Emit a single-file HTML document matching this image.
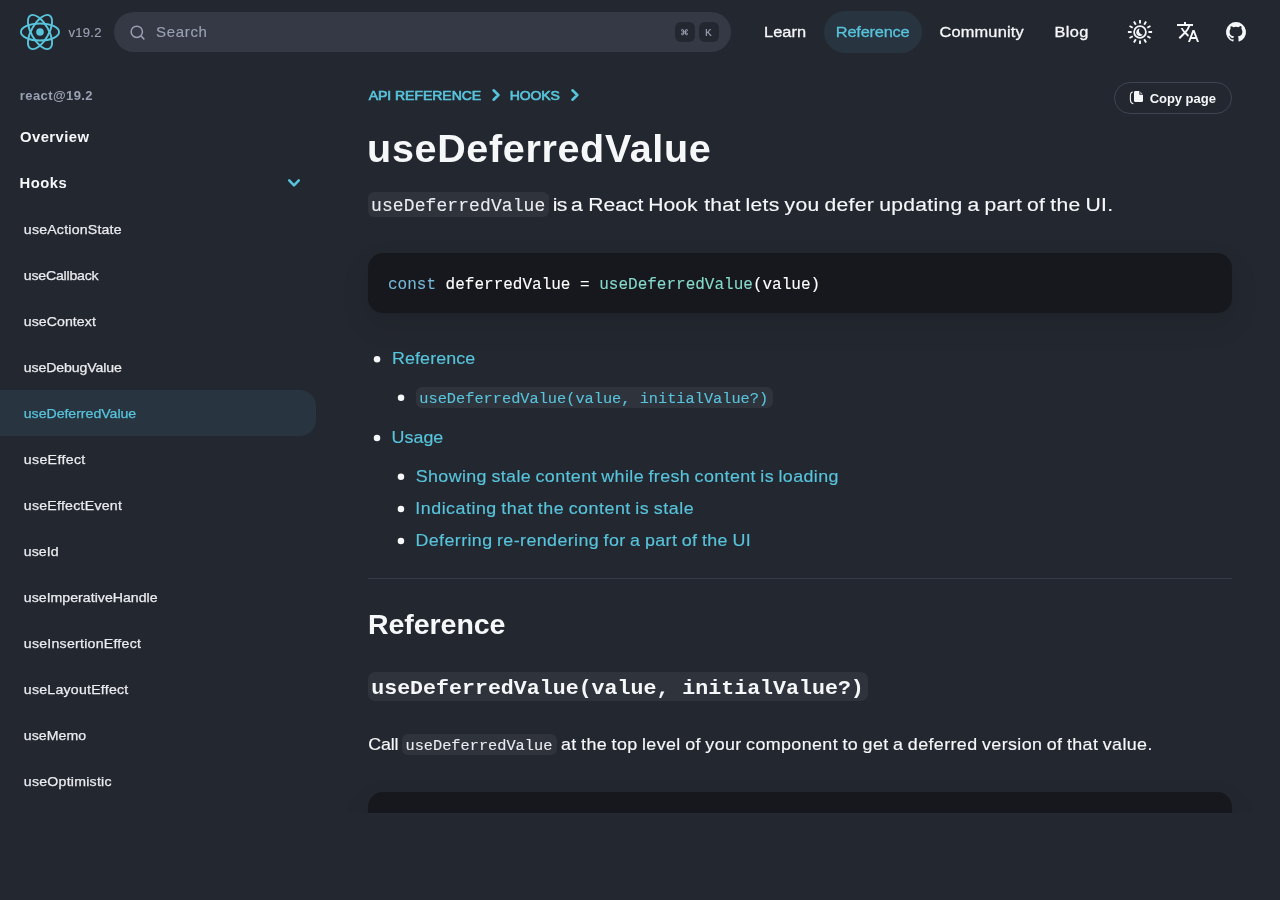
<!DOCTYPE html>
<html lang="en">
<head>
<meta charset="utf-8">
<title>useDeferredValue – React</title>
<style>
*{box-sizing:border-box;margin:0;padding:0}
html,body{width:1280px;height:900px;overflow:hidden;background:#23272f}
body{position:relative;font-family:"Liberation Sans",sans-serif;color:#f6f7f9}
#clip{position:absolute;left:0;top:0;width:1280px;height:813px;overflow:hidden;will-change:transform}
.a{position:absolute;white-space:pre;line-height:20px}
.s{position:absolute}
svg{position:absolute;display:block;overflow:visible}
#search{left:114px;top:12px;width:617px;height:40px;border-radius:20px;background:#343945}
.kbd{top:22px;width:20px;height:20px;border-radius:6px;background:#23272f}
#pill{left:824px;top:11px;width:98px;height:42px;border-radius:21px;background:#283541}
#active{left:0;top:390px;width:316px;height:46px;border-radius:0 16px 16px 0;background:#283541}
.code{background:#16181d;border-radius:15px;box-shadow:0 .8px 2px rgba(0,0,0,.032),0 2.700px 6.700px rgba(0,0,0,.048),0 12px 30px rgba(0,0,0,.09)}
.ic{background:#2f333c;border-radius:6px}
.dot{width:6.6px;height:6.6px;border-radius:50%;background:#f6f7f9;margin:-3.3px 0 0 -3.3px}
#copybtn{left:1114px;top:82px;width:118px;height:32px;border:1px solid #3e4555;border-radius:16px}
#hr{left:368px;top:578px;width:864px;height:1px;background:#343a46}
</style>
</head>
<body>
<div id="clip">

<!-- header -->
<svg style="left:20px;top:14px" width="40" height="36" viewBox="-10.5 -9.45 21 18.9" fill="none"><circle r="2" fill="#58c4dc"/><g stroke="#58c4dc" stroke-width="1"><ellipse rx="10" ry="4.5"/><ellipse rx="10" ry="4.5" transform="rotate(60)"/><ellipse rx="10" ry="4.5" transform="rotate(120)"/></g></svg>
<div class="s" id="search"></div>
<svg style="left:130px;top:25px" width="15" height="15" viewBox="0 0 20 20"><path d="M14.386 14.386l4.0877 4.0877-4.0877-4.0877c-2.9418 2.9419-7.7115 2.9419-10.6533 0-2.9419-2.9418-2.9419-7.7115 0-10.6533 2.9418-2.9419 7.7115-2.9419 10.6533 0 2.9419 2.9418 2.9419 7.7115 0 10.6533z" stroke="#99a1b3" fill="none" stroke-width="2" stroke-linecap="round" stroke-linejoin="round"/></svg>
<div class="s kbd" style="left:675px"></div>
<div class="s kbd" style="left:699px"></div>
<svg style="left:681.2px;top:28.800px" width="7" height="6.300" viewBox="0 0 14 14" preserveAspectRatio="none" fill="none" stroke="#99a1b3" stroke-width="2"><path d="M5 5V3a2 2 0 1 0-2 2h8a2 2 0 1 0-2-2v8a2 2 0 1 0 2-2H3a2 2 0 1 0 2 2z"/></svg>
<div class="s" id="pill"></div>
<!-- theme icon -->
<svg style="left:1128px;top:20px" width="24" height="24" viewBox="-12 -12 24 24" fill="none" stroke="#f6f7f9">
<circle r="5.9" stroke-width="1.800"/>
<path stroke-width="1.900" d="M0.00 -8.40L0.00 -12.10M4.20 -7.27L6.05 -10.48M7.27 -4.20L10.48 -6.05M8.40 -0.00L12.10 -0.00M7.27 4.20L10.48 6.05M4.20 7.27L6.05 10.48M0.00 8.40L0.00 12.10M-4.20 7.27L-6.05 10.48M-7.27 4.20L-10.48 6.05M-8.40 0.00L-12.10 0.00M-7.27 -4.20L-10.48 -6.05M-4.20 -7.27L-6.05 -10.48"/>
<path d="M-0.300-3.400A3.700 3.700 0 1 0 2.700 2.700 3.800 3.800 0 0 1-0.300-3.400z" fill="#f6f7f9" stroke="none"/>
</svg>
<!-- translate icon -->
<svg style="left:1176px;top:20px" width="24" height="24" viewBox="0 0 24 24"><path fill="#f6f7f9" d="M12.87 15.07l-2.54-2.51.03-.03c1.74-1.94 2.98-4.17 3.71-6.53H17V4h-7V2H8v2H1v1.99h11.17C11.5 7.92 10.44 9.75 9 11.35 8.07 10.32 7.3 9.19 6.69 8h-2c.73 1.63 1.73 3.17 2.98 4.56l-5.09 5.02L4 19l5-5 3.11 3.11.76-2.04zM18.5 10h-2L12 22h2l1.12-3h4.75L21 22h2l-4.5-12zm-2.62 7l1.62-4.33L19.12 17h-3.24z"/></svg>
<!-- github icon -->
<svg style="left:1226px;top:20px" width="24" height="24" viewBox="0 -2 24 24" fill="#f6f7f9"><path d="M10 0a10 10 0 0 0-3.16 19.49c.5.1.68-.22.68-.48l-.01-1.7c-2.78.6-3.37-1.34-3.37-1.34-.46-1.16-1.11-1.47-1.11-1.47-.9-.62.07-.6.07-.6 1 .07 1.53 1.03 1.53 1.03.9 1.52 2.34 1.08 2.91.83.1-.65.35-1.09.63-1.34-2.22-.25-4.55-1.11-4.55-4.94 0-1.1.39-1.99 1.03-2.69a3.6 3.6 0 0 1 .1-2.64s.84-.27 2.75 1.02a9.58 9.58 0 0 1 5 0c1.91-1.3 2.75-1.02 2.75-1.02.55 1.37.2 2.4.1 2.64.64.7 1.03 1.6 1.03 2.69 0 3.84-2.34 4.68-4.57 4.93.36.31.68.92.68 1.85l-.01 2.75c0 .26.18.58.69.48A10 10 0 0 0 10 0"/></svg>

<!-- sidebar -->
<div class="s" id="active"></div>
<svg style="left:284px;top:173px" width="20" height="20" viewBox="0 0 20 20" fill="none" stroke="#58c4dc" stroke-width="2.5" stroke-linecap="round" stroke-linejoin="round"><path d="M5.2 7.4l4.8 4.9 4.8-4.9"/></svg>

<!-- content shapes -->
<svg style="left:0;top:0" width="1280" height="120" viewBox="0 0 1280 120" fill="none" stroke="#58c4dc" stroke-width="2.600" stroke-linecap="round" stroke-linejoin="round"><path d="M493.6 90.3l4.8 4.7-4.8 4.7M572.5 90.3l4.8 4.7-4.8 4.7"/></svg>
<div class="s" id="copybtn"></div>
<svg style="left:1129px;top:90px" width="15" height="15" viewBox="0 0 15 15"><path d="M6.4 1h4.1L14 4.5v6.2a1.4 1.4 0 0 1-1.4 1.4H6.4A1.4 1.4 0 0 1 5 10.700V2.400A1.400 1.400 0 0 1 6.400 1z" fill="#f6f7f9"/><path d="M10.900 0.900v3.400h3.400" fill="none" stroke="#23272f" stroke-width="1.1"/><path d="M3.400 2.100C2 2.600 1.400 3.600 1.400 5.200v4.500c0 2 .8 3.400 2.600 4" fill="none" stroke="#f6f7f9" stroke-width="1.100" stroke-linecap="round"/></svg>
<div class="s ic" style="left:368px;top:192px;width:180.700px;height:24.700px"></div>
<div class="s code" style="left:368px;top:253px;width:864px;height:60px"></div>
<div class="s ic" style="left:416.250px;top:387.300px;width:356.400px;height:20.700px"></div>
<svg style="left:0;top:340px" width="420" height="220" viewBox="0 340 420 220" fill="#f6f7f9"><circle cx="377.050" cy="359.150" r="3.250"/><circle cx="401.050" cy="397.800" r="3.250"/><circle cx="377" cy="437.950" r="3.250"/><circle cx="400.950" cy="476.800" r="3.250"/><circle cx="400.950" cy="508.900" r="3.250"/><circle cx="400.950" cy="541.050" r="3.250"/></svg>
<div class="s" id="hr"></div>
<div class="s ic" style="left:368.200px;top:672px;width:499.600px;height:28.900px;border-radius:7px"></div>
<div class="s ic" style="left:402.200px;top:734.400px;width:154.500px;height:20.400px"></div>
<div class="s code" style="left:368px;top:792px;width:864px;height:200px"></div>

<div class="a" id="ver" style="left:0;top:23.00px;font-size:13px;color:#99a1b3;-webkit-text-stroke:.15px;letter-spacing:0.270px;transform:translateX(68.50px) scaleX(1.0);transform-origin:0 0;">v19.2</div>
<div class="a" id="stext" style="left:0;top:22.00px;font-size:15px;color:#99a1b3;-webkit-text-stroke:.15px;letter-spacing:0.679px;transform:translateX(156.00px) scaleX(1.0);transform-origin:0 0;">Search</div>
<div class="a" id="kk" style="left:0;top:23.00px;font-family:'Liberation Mono',monospace;font-size:11px;color:#99a1b3;-webkit-text-stroke:.1px;letter-spacing:0.000px;transform:translateX(705.03px) scaleX(1.0);transform-origin:0 0;">K</div>
<div class="a" id="n1" style="left:0;top:22.00px;font-size:15.3px;-webkit-text-stroke:.3px;letter-spacing:0.015px;transform:translateX(764.12px) scaleX(1.07);transform-origin:0 0;">Learn</div>
<div class="a" id="n2" style="left:0;top:22.00px;font-size:15.3px;color:#58c4dc;-webkit-text-stroke:.3px;letter-spacing:-0.213px;transform:translateX(835.87px) scaleX(1.07);transform-origin:0 0;">Reference</div>
<div class="a" id="n3" style="left:0;top:22.00px;font-size:15.3px;-webkit-text-stroke:.3px;letter-spacing:0.182px;transform:translateX(939.40px) scaleX(1.07);transform-origin:0 0;">Community</div>
<div class="a" id="n4" style="left:0;top:22.00px;font-size:15.3px;-webkit-text-stroke:.3px;letter-spacing:0.377px;transform:translateX(1054.41px) scaleX(1.07);transform-origin:0 0;">Blog</div>
<div class="a" id="s0" style="left:0;top:86.00px;font-size:13px;font-weight:700;color:#99a1b3;letter-spacing:0.409px;transform:translateX(19.78px) scaleX(1.0);transform-origin:0 0;">react@19.2</div>
<div class="a" id="s1" style="left:0;top:127.00px;font-size:14.8px;font-weight:700;letter-spacing:0.471px;transform:translateX(19.95px) scaleX(1.0);transform-origin:0 0;">Overview</div>
<div class="a" id="s2" style="left:0;top:173.00px;font-size:14.8px;font-weight:700;letter-spacing:0.479px;transform:translateX(19.51px) scaleX(1.0);transform-origin:0 0;">Hooks</div>
<div class="a" id="i1" style="left:0;top:220.00px;font-size:13.2px;-webkit-text-stroke:.25px;color:#ebecf0;letter-spacing:0.207px;transform:translateX(23.81px) scaleX(1.07);transform-origin:0 0;">useActionState</div>
<div class="a" id="i2" style="left:0;top:266.00px;font-size:13.2px;-webkit-text-stroke:.25px;color:#ebecf0;letter-spacing:-0.188px;transform:translateX(23.79px) scaleX(1.07);transform-origin:0 0;">useCallback</div>
<div class="a" id="i3" style="left:0;top:312.00px;font-size:13.2px;-webkit-text-stroke:.25px;color:#ebecf0;letter-spacing:0.065px;transform:translateX(23.79px) scaleX(1.07);transform-origin:0 0;">useContext</div>
<div class="a" id="i4" style="left:0;top:358.00px;font-size:13.2px;-webkit-text-stroke:.25px;color:#ebecf0;letter-spacing:-0.104px;transform:translateX(23.79px) scaleX(1.07);transform-origin:0 0;">useDebugValue</div>
<div class="a" id="i5" style="left:0;top:404.00px;font-size:13.2px;-webkit-text-stroke:.25px;color:#58c4dc;letter-spacing:-0.018px;transform:translateX(23.77px) scaleX(1.07);transform-origin:0 0;">useDeferredValue</div>
<div class="a" id="i6" style="left:0;top:450.00px;font-size:13.2px;-webkit-text-stroke:.25px;color:#ebecf0;letter-spacing:0.330px;transform:translateX(23.81px) scaleX(1.07);transform-origin:0 0;">useEffect</div>
<div class="a" id="i7" style="left:0;top:496.00px;font-size:13.2px;-webkit-text-stroke:.25px;color:#ebecf0;letter-spacing:0.242px;transform:translateX(23.81px) scaleX(1.07);transform-origin:0 0;">useEffectEvent</div>
<div class="a" id="i8" style="left:0;top:542.00px;font-size:13.2px;-webkit-text-stroke:.25px;color:#ebecf0;letter-spacing:0.047px;transform:translateX(23.79px) scaleX(1.07);transform-origin:0 0;">useId</div>
<div class="a" id="i9" style="left:0;top:588.00px;font-size:13.2px;-webkit-text-stroke:.25px;color:#ebecf0;letter-spacing:0.025px;transform:translateX(23.81px) scaleX(1.07);transform-origin:0 0;">useImperativeHandle</div>
<div class="a" id="i10" style="left:0;top:634.00px;font-size:13.2px;-webkit-text-stroke:.25px;color:#ebecf0;letter-spacing:0.242px;transform:translateX(23.79px) scaleX(1.07);transform-origin:0 0;">useInsertionEffect</div>
<div class="a" id="i11" style="left:0;top:680.00px;font-size:13.2px;-webkit-text-stroke:.25px;color:#ebecf0;letter-spacing:0.231px;transform:translateX(23.83px) scaleX(1.07);transform-origin:0 0;">useLayoutEffect</div>
<div class="a" id="i12" style="left:0;top:726.00px;font-size:13.2px;-webkit-text-stroke:.25px;color:#ebecf0;letter-spacing:0.047px;transform:translateX(23.79px) scaleX(1.07);transform-origin:0 0;">useMemo</div>
<div class="a" id="i13" style="left:0;top:772.00px;font-size:13.2px;-webkit-text-stroke:.25px;color:#ebecf0;letter-spacing:0.235px;transform:translateX(23.83px) scaleX(1.07);transform-origin:0 0;">useOptimistic</div>
<div class="a" id="bc1" style="left:0;top:86.00px;font-size:13px;color:#58c4dc;-webkit-text-stroke:.65px;letter-spacing:-0.054px;transform:translateX(368.74px) scaleX(1.08);transform-origin:0 0;">API REFERENCE</div>
<div class="a" id="bc2" style="left:0;top:86.00px;font-size:13px;color:#58c4dc;-webkit-text-stroke:.65px;letter-spacing:-0.118px;transform:translateX(509.75px) scaleX(1.08);transform-origin:0 0;">HOOKS</div>
<div class="a" id="copy" style="left:0;top:89.00px;font-size:13px;font-weight:700;letter-spacing:-0.028px;transform:translateX(1149.65px) scaleX(1.0);transform-origin:0 0;">Copy page</div>
<div class="a" id="h1" style="left:0;top:138.00px;font-size:39.5px;font-weight:700;letter-spacing:0.660px;transform:translateX(367.12px) scaleX(1.0);transform-origin:0 0;">useDeferredValue</div>
<div class="a" id="c0" style="left:0;top:196.00px;font-family:'Liberation Mono',monospace;font-size:17.5px;color:#ebecf0;-webkit-text-stroke:.1px;letter-spacing:0.092px;transform:translateX(371.04px) scaleX(1.0286);transform-origin:0 0;">useDeferredValue</div>
<div class="a" id="p0a" style="left:0;top:195.00px;font-size:19.2px;word-spacing:-1px;-webkit-text-stroke:.15px;letter-spacing:-0.543px;transform:translateX(552.69px) scaleX(1.1);transform-origin:0 0;">is a</div>
<div class="a" id="p0b" style="left:0;top:195.00px;font-size:19.2px;word-spacing:-1px;-webkit-text-stroke:.15px;letter-spacing:0.033px;transform:translateX(588.14px) scaleX(1.1);transform-origin:0 0;">React Hook</div>
<div class="a" id="p0c" style="left:0;top:195.00px;font-size:19.2px;word-spacing:-1px;-webkit-text-stroke:.15px;letter-spacing:0.260px;transform:translateX(704.18px) scaleX(1.1);transform-origin:0 0;">that lets you defer updating a part of the UI.</div>
<div class="a" id="l1" style="left:0;top:348.00px;font-size:16.1px;color:#58c4dc;-webkit-text-stroke:.15px;letter-spacing:0.064px;transform:translateX(392.11px) scaleX(1.11);transform-origin:0 0;">Reference</div>
<div class="a" id="c2" style="left:0;top:389.00px;font-family:'Liberation Mono',monospace;font-size:15.3px;color:#58c4dc;-webkit-text-stroke:.1px;letter-spacing:0.000px;transform:translateX(419.33px) scaleX(1.0);transform-origin:0 0;">useDeferredValue(value, initialValue?)</div>
<div class="a" id="l2" style="left:0;top:427.00px;font-size:16.1px;color:#58c4dc;-webkit-text-stroke:.15px;letter-spacing:0.022px;transform:translateX(391.57px) scaleX(1.11);transform-origin:0 0;">Usage</div>
<div class="a" id="l2a" style="left:0;top:466.00px;font-size:16.1px;color:#58c4dc;word-spacing:-.8px;-webkit-text-stroke:.15px;letter-spacing:0.350px;transform:translateX(415.69px) scaleX(1.11);transform-origin:0 0;">Showing stale content while fresh content is loading</div>
<div class="a" id="l2b" style="left:0;top:498.00px;font-size:16.1px;color:#58c4dc;word-spacing:-.8px;-webkit-text-stroke:.15px;letter-spacing:0.453px;transform:translateX(415.29px) scaleX(1.11);transform-origin:0 0;">Indicating that the content is stale</div>
<div class="a" id="l2c" style="left:0;top:530.00px;font-size:16.1px;color:#58c4dc;word-spacing:-.8px;-webkit-text-stroke:.15px;letter-spacing:0.359px;transform:translateX(415.47px) scaleX(1.11);transform-origin:0 0;">Deferring re-rendering for a part of the UI</div>
<div class="a" id="h2" style="left:0;top:614.00px;font-size:28.5px;font-weight:700;letter-spacing:-0.034px;transform:translateX(367.90px) scaleX(1.0);transform-origin:0 0;">Reference</div>
<div class="a" id="c3" style="left:0;top:679.00px;font-family:'Liberation Mono',monospace;font-size:21px;font-weight:700;letter-spacing:0.000px;transform:translateX(371.23px) scaleX(1.0286);transform-origin:0 0;">useDeferredValue(value, initialValue?)</div>
<div class="a" id="p1" style="left:0;top:734.00px;font-size:16.1px;-webkit-text-stroke:.15px;letter-spacing:-0.167px;transform:translateX(368.31px) scaleX(1.11);transform-origin:0 0;">Call</div>
<div class="a" id="c4" style="left:0;top:736.00px;font-family:'Liberation Mono',monospace;font-size:15.3px;color:#ebecf0;-webkit-text-stroke:.1px;letter-spacing:0.000px;transform:translateX(405.45px) scaleX(1.0);transform-origin:0 0;">useDeferredValue</div>
<div class="a" id="p2" style="left:0;top:734.00px;font-size:16.1px;word-spacing:-.8px;-webkit-text-stroke:.15px;letter-spacing:0.352px;transform:translateX(560.91px) scaleX(1.11);transform-origin:0 0;">at the top level of your component to get a deferred version of that value.</div>
<div class="a" id="c1" style="left:0;top:275.00px;font-family:'Liberation Mono',monospace;font-size:16px;color:#fff;-webkit-text-stroke:.1px;letter-spacing:0.000px;transform:translateX(388.00px) scaleX(1.0);transform-origin:0 0;"><span style="color:#77b7d7">const</span> deferredValue = <span style="color:#86d9ca">useDeferredValue</span>(value)</div>
</div>
</body>
</html>
